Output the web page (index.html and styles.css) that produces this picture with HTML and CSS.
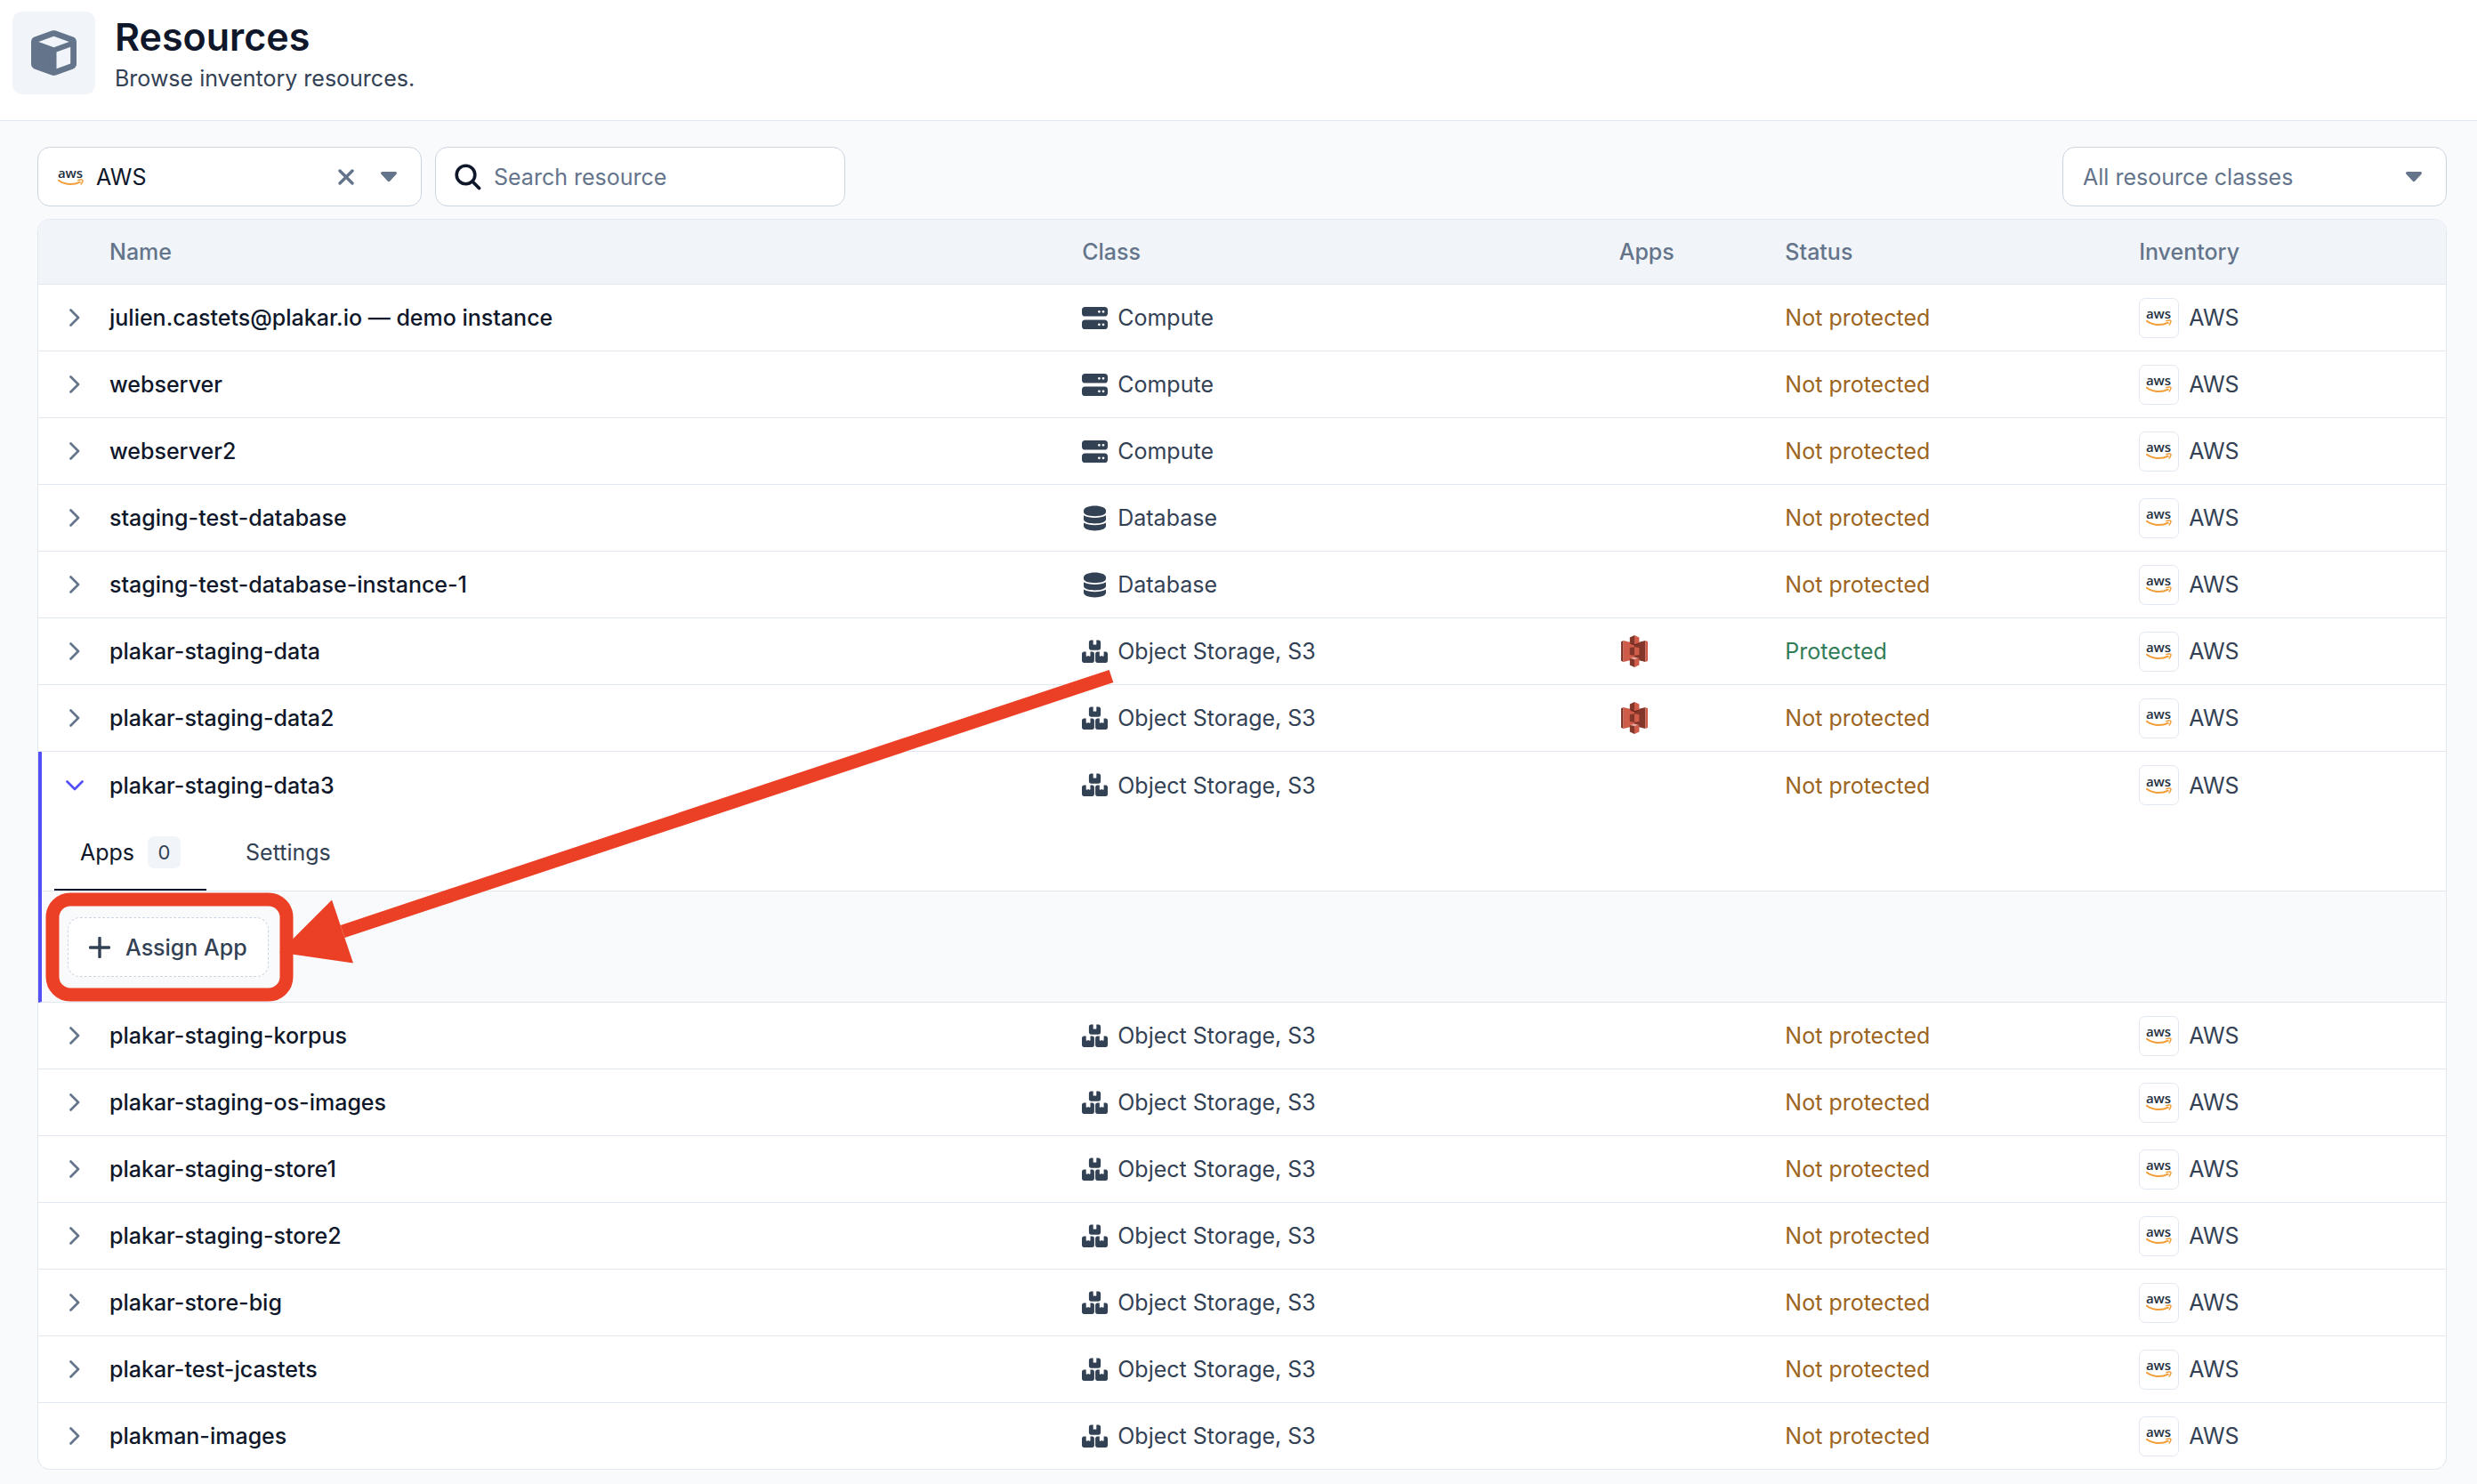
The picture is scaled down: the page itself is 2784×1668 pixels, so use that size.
FILE: index.html
```
<!DOCTYPE html>
<html lang="en">
<head>
    <meta charset="UTF-8">
    <meta name="viewport" content="width=device-width, initial-scale=1.0">
    <title>Resources</title>
    <link rel="stylesheet" href="styles.css">
</head>
<body>
    <svg class="sprite" aria-hidden="true">
        <symbol id="icon-aws" viewBox="0 0 29 20">
            <text x="14" y="11" text-anchor="middle" class="aws-word">aws</text>
            <path d="M0.8 13.800C4.600 16.600 9.200 18.100 14.200 18.100c4 0 7.600-.9 10.600-2.400" fill="none" stroke="#f19d38" stroke-width="2" stroke-linecap="round"/>
            <path d="M22.800 13.700c2-1 4.600-.9 5-.3s-.1 3-1.700 4.600" fill="none" stroke="#f19d38" stroke-width="1.500" stroke-linecap="round"/>
        </symbol>
        <symbol id="icon-caret" viewBox="0 0 18 12">
            <path d="M1.600 0h14.800c1.500 0 2.100 1.700 1.100 2.700l-7.200 7.900c-.7.8-1.900.8-2.600 0L.5 2.700C-.5 1.700.1 0 1.600 0z" fill="currentColor"/>
        </symbol>
        <symbol id="icon-close" viewBox="0 0 18 18">
            <path d="M2 2l14 14M16 2L2 16" fill="none" stroke="currentColor" stroke-width="3.400" stroke-linecap="round"/>
        </symbol>
        <symbol id="icon-search" viewBox="0 0 30 30">
            <circle cx="12.500" cy="12.500" r="10.300" fill="none" stroke="currentColor" stroke-width="3.600"/>
            <path d="M20 20l7.500 7.500" fill="none" stroke="currentColor" stroke-width="3.800" stroke-linecap="round"/>
        </symbol>
        <symbol id="icon-chevron" viewBox="0 0 12 20">
            <path d="M1.500 1.500L10 10l-8.500 8.500" fill="none" stroke="currentColor" stroke-width="2.700" stroke-linecap="round" stroke-linejoin="round"/>
        </symbol>
        <symbol id="icon-plus" viewBox="0 0 24 24">
            <path d="M12 1.500v21M1.500 12h21" fill="none" stroke="currentColor" stroke-width="3.400" stroke-linecap="round"/>
        </symbol>
        <symbol id="icon-cube" viewBox="0 0 51 51">
            <path fill="currentColor" fill-rule="evenodd" d="M23.200.5c1.500-.5 3.100-.5 4.600 0l19.400 7c2.300.8 3.800 3 3.800 5.400v25.200c0 2.400-1.500 4.600-3.800 5.400l-19.400 7c-1.500.5-3.100.5-4.600 0l-19.400-7C1.500 42.700 0 40.500 0 38.100V12.900c0-2.400 1.500-4.600 3.800-5.400zM25.500 6.800L8.300 13l17.200 6.200L42.700 13zM28.500 24.500v18.800l15.700-5.700V18.800z"/>
        </symbol>
        <symbol id="icon-compute" viewBox="0 0 29 29">
            <path fill="currentColor" fill-rule="evenodd" d="M3.600 2h21.800A3.600 3.600 0 0 1 29 5.600v3.300a3.600 3.600 0 0 1-3.600 3.600H3.600A3.600 3.600 0 0 1 0 8.900V5.600A3.600 3.600 0 0 1 3.600 2zM19.400 5.900a1.400 1.400 0 1 0 0 2.800 1.400 1.400 0 0 0 0-2.800zM24 5.900a1.400 1.400 0 1 0 0 2.800 1.400 1.400 0 0 0 0-2.800zM3.600 16.500h21.800a3.600 3.600 0 0 1 3.600 3.600v3.300a3.600 3.600 0 0 1-3.600 3.600H3.600A3.600 3.600 0 0 1 0 23.400v-3.300a3.600 3.600 0 0 1 3.600-3.600zM19.400 20.400a1.400 1.400 0 1 0 0 2.800 1.400 1.400 0 0 0 0-2.800zM24 20.400a1.400 1.400 0 1 0 0 2.800 1.400 1.400 0 0 0 0-2.800z"/>
        </symbol>
        <symbol id="icon-database" viewBox="0 0 29 29">
            <path fill="currentColor" d="M14.500.5C21.500.5 27 2.800 27 5.700v1.800c0 2.900-5.500 4.700-12.500 4.700S2 10.400 2 7.500V5.700C2 2.800 7.500.5 14.500.5zM2 11.300c3 1.900 7.500 2.700 12.500 2.700s9.500-.8 12.500-2.700v4.500c0 2.900-5.500 4.700-12.500 4.700S2 18.700 2 15.800zM2 19.600c3 1.900 7.500 2.700 12.500 2.700s9.500-.8 12.500-2.700v3.700c0 2.900-5.500 5.200-12.500 5.200S2 26.200 2 23.300z"/>
        </symbol>
        <symbol id="icon-storage" viewBox="0 0 29 29">
            <path fill="currentColor" d="M10.300 1.500h2.400v4.600c0 .6.500.9 1 .6l.8-.4.800.4c.5.300 1 0 1-.6V1.500h2.400c1.400 0 2.400 1 2.400 2.400v6.400c0 1.400-1 2.400-2.400 2.400h-8.400c-1.400 0-2.400-1-2.400-2.400V3.900c0-1.400 1-2.400 2.400-2.400z"/>
            <path fill="currentColor" d="M2.400 14.500h2.300v4.600c0 .6.500.9 1 .6l1.400-.7 1.400.7c.5.300 1 0 1-.6v-4.600h2.200c1.400 0 2.200 1 2.200 2.400v7.700c0 1.400-.9 2.400-2.200 2.400H2.400C1 27 0 26 0 24.600v-7.700c0-1.400 1-2.400 2.400-2.400z"/>
            <path fill="currentColor" d="M17.500 14.500h2.300v4.600c0 .6.500.9 1 .6l1.400-.7 1.400.7c.5.300 1 0 1-.6v-4.600h2.200c1.400 0 2.200 1 2.200 2.400v7.700c0 1.400-.9 2.400-2.200 2.400h-9.300c-1.400 0-2.400-1-2.400-2.400v-7.700c0-1.400 1-2.400 2.400-2.400z"/>
        </symbol>
        <symbol id="icon-s3" viewBox="-2 0 34 36">
            <path fill="#83362a" d="M0 7.300l2.600-1.300v24L0 28.700z"/>
            <path fill="#cf5b49" d="M2.600 6L15 9v18L2.600 30z"/>
            <path fill="#83362a" d="M27.400 6L15 9v18l12.400 3z"/>
            <path fill="#cf5b49" d="M27.400 6L30 7.300v21.400L27.400 30z"/>
            <path fill="#5e1f18" d="M9.800 9.500L15 8l5.400 1.500L15 11.200z"/>
            <path fill="#83362a" d="M9.800 2.600L15 0v10.200l-5.200-1.400zM9.800 14l5.200-.7v9.500l-5.200-.7z"/>
            <path fill="#cf5b49" d="M15 0l5.400 2.600v6.200L15 10.200zM15 13.300l5.400.7v8.100l-5.400.7z"/>
            <path fill="#e9aaa0" d="M9.800 26L15 24.500l5.400 1.500L15 27.300z"/>
            <path fill="#83362a" d="M9.800 26l5.200 1.300V36l-5.200-2.600z"/>
            <path fill="#cf5b49" d="M20.400 26L15 27.300V36l5.400-2.600z"/>
        </symbol>
    </svg>

    <header class="page-header">
        <div class="page-icon"><svg width="51" height="51"><use href="#icon-cube"/></svg></div>
        <div>
            <h1 class="page-title">Resources</h1>
            <p class="page-subtitle">Browse inventory resources.</p>
        </div>
    </header>

    <main class="page-content">
        <div class="toolbar">
            <div class="field field-select">
                <svg width="29" height="20"><use href="#icon-aws"/></svg>
                <select class="field-control" aria-label="Inventory">
                    <option>AWS</option>
                </select>
                <button type="button" class="icon-button" aria-label="Clear inventory"><svg width="18" height="18"><use href="#icon-close"/></svg></button>
                <svg class="field-caret" width="18" height="12"><use href="#icon-caret"/></svg>
            </div>
            <div class="field field-search">
                <svg width="30" height="30"><use href="#icon-search"/></svg>
                <input type="text" class="field-control" placeholder="Search resource" aria-label="Search resource">
            </div>
            <div class="field field-select field-class">
                <select class="field-control muted" aria-label="Resource class">
                    <option>All resource classes</option>
                </select>
                <svg class="field-caret" width="18" height="12"><use href="#icon-caret"/></svg>
            </div>
        </div>

        <div class="table-wrapper">
            <table class="resources">
                <colgroup>
                    <col class="col-toggle">
                    <col class="col-name">
                    <col class="col-class">
                    <col class="col-apps">
                    <col class="col-status">
                    <col>
                </colgroup>
                <thead>
                    <tr>
                        <th></th>
                        <th>Name</th>
                        <th>Class</th>
                        <th>Apps</th>
                        <th>Status</th>
                        <th>Inventory</th>
                    </tr>
                </thead>
                <tbody id="resourceRows"></tbody>
            </table>

            <svg class="callout" width="1220" height="890" aria-hidden="true">
                <rect x="17" y="765" width="263" height="107" rx="20" fill="none" stroke="#eb4025" stroke-width="15"/>
                <path d="M343 801L1207 514" stroke="#eb4025" stroke-width="15"/>
                <path d="M272 824.500L331 765.500L355 836.500z" fill="#eb4025"/>
            </svg>
        </div>
    </main>

    <template id="detailTemplate">
        <tr class="detail">
            <td colspan="6">
                <div class="tabs" role="tablist">
                    <button type="button" class="tab active" role="tab" aria-selected="true">Apps <span class="badge">0</span></button>
                    <button type="button" class="tab" role="tab" aria-selected="false">Settings</button>
                </div>
                <div class="panel">
                    <button type="button" class="assign-button"><svg width="24" height="24"><use href="#icon-plus"/></svg>Assign App</button>
                </div>
            </td>
        </tr>
    </template>

    <script src="script.js"></script>
</body>
</html>
```
FILE: styles.css
```
* {
    box-sizing: border-box;
}

body {
    margin: 0;
    font-family: Inter, "Liberation Sans", sans-serif;
    font-size: 25px;
    line-height: 36px;
    color: #0f172a;
    background-color: #f8fafc;
}

svg {
    display: block;
    flex-shrink: 0;
}

button,
input,
select {
    font: inherit;
    color: inherit;
}

.sprite {
    display: none;
}

.aws-word {
    font-family: "Open Sans", "Noto Sans", sans-serif;
    font-size: 15px;
    font-weight: 600;
    fill: #252f3e;
}

/* Header */

.page-header {
    display: flex;
    gap: 22px;
    padding: 13px 14px 29px;
    background-color: #fff;
    border-bottom: 1px solid #e2e8f0;
}

.page-icon {
    display: flex;
    align-items: center;
    justify-content: center;
    width: 93px;
    height: 93px;
    color: #64748b;
    background-color: #f1f5f9;
    border-radius: 11px;
}

.page-title {
    margin: 0;
    font-size: 43px;
    font-weight: 600;
    line-height: 57px;
}

.page-subtitle {
    margin: 0;
    color: #334155;
}

/* Toolbar */

.page-content {
    padding: 29px 34px 16px 42px;
}

.toolbar {
    display: flex;
    gap: 15px;
    margin-bottom: 14px;
}

.field {
    display: flex;
    align-items: center;
    height: 67px;
    padding: 0 21px;
    background-color: #fff;
    border: 1px solid #cbd5e1;
    border-radius: 14px;
}

.field-select {
    width: 432px;
    padding: 0 27px 0 22px;
}

.field-search {
    width: 461px;
}

.field-class {
    margin-left: auto;
}

.field-control {
    flex: 1;
    min-width: 0;
    height: 36px;
    padding: 0;
    background: none;
    border: none;
    outline: none;
    appearance: none;
}

svg + .field-control {
    margin-left: 14px;
}

.field-control::placeholder {
    color: #64748b;
    opacity: 1;
}

.muted,
.field-caret {
    color: #64748b;
}

.icon-button {
    padding: 0;
    color: #64748b;
    background: none;
    border: none;
    cursor: pointer;
}

.icon-button + .field-caret {
    margin-left: 30px;
}

/* Table */

.table-wrapper {
    position: relative;
    background-color: #fff;
    border: 1px solid #e2e8f0;
    border-radius: 14px;
}

.resources {
    width: 100%;
    table-layout: fixed;
    border-collapse: separate;
    border-spacing: 0;
}

.col-toggle {
    width: 64px;
}

.col-name {
    width: 40.4%;
}

.col-class {
    width: 22.3%;
}

.col-apps {
    width: 6.9%;
}

.col-status {
    width: 14.7%;
}

.resources th {
    height: 73px;
    padding: 0 16px;
    font-weight: 500;
    text-align: left;
    color: #64748b;
    background-color: #f1f5f9;
    border-bottom: 1px solid #e2e8f0;
}

.resources th:first-child {
    border-top-left-radius: 13px;
}

.resources th:last-child {
    border-top-right-radius: 13px;
}

.resources td {
    height: 75px;
    padding: 0 16px;
    color: #334155;
    border-bottom: 1px solid #e2e8f0;
}

.resources tr:last-child td {
    height: 74px;
    border-bottom: none;
}

.resources td.name {
    font-weight: 500;
    color: #0f172a;
}

.resources td.status {
    color: #9c6420;
}

.resources td.protected {
    color: #327d58;
}

.resources td.toggle {
    padding: 0;
}

.toggle-button {
    display: flex;
    align-items: center;
    justify-content: center;
    width: 36px;
    height: 36px;
    margin-left: 23px;
    padding: 0;
    color: #64748b;
    background: none;
    border: none;
    cursor: pointer;
}

.with-icon {
    display: flex;
    align-items: center;
    gap: 11px;
}

.inventory-logo {
    display: flex;
    align-items: center;
    justify-content: center;
    width: 45px;
    height: 45px;
    border: 1px solid #e2e8f0;
    border-radius: 7px;
}

/* Expanded row */

.resources tr.open td {
    border-bottom: none;
}

.resources tr.open td.toggle {
    box-shadow: inset 4px 0 #544ff7;
}

.open .toggle-button {
    color: #544ff7;
}

.open .toggle-button svg {
    transform: rotate(90deg);
}

.resources tr.detail td {
    padding: 0;
    border-left: 4px solid #544ff7;
}

.tabs {
    display: flex;
    gap: 15px;
    padding-left: 14px;
    border-bottom: 1px solid #e2e8f0;
}

.tab {
    display: flex;
    align-items: center;
    gap: 15px;
    height: 81px;
    padding: 0 29px 3px;
    color: #334155;
    background: none;
    border: none;
    border-bottom: 2px solid transparent;
    cursor: pointer;
}

.tab.active {
    color: #0f172a;
    border-bottom-color: #0f172a;
}

.badge {
    min-width: 37px;
    padding: 0 8px;
    font-size: 22px;
    text-align: center;
    color: #334155;
    background-color: #f1f5f9;
    border-radius: 7px;
}

.panel {
    padding: 29px 29px 28px;
    background-color: #f8fafc;
}

.assign-button {
    display: flex;
    align-items: center;
    gap: 17px;
    height: 67px;
    padding: 0 23px;
    font-weight: 500;
    color: #334155;
    background-color: #fff;
    border: 1px dashed #cbd5e1;
    border-radius: 14px;
    cursor: pointer;
}

.callout {
    position: absolute;
    top: -1px;
    left: -1px;
    pointer-events: none;
}
```
FILE: script.js
```
const resources = [
    { name: 'julien.castets@plakar.io — demo instance', type: 'compute' },
    { name: 'webserver', type: 'compute' },
    { name: 'webserver2', type: 'compute' },
    { name: 'staging-test-database', type: 'database' },
    { name: 'staging-test-database-instance-1', type: 'database' },
    { name: 'plakar-staging-data', type: 'storage', app: true, isProtected: true },
    { name: 'plakar-staging-data2', type: 'storage', app: true },
    { name: 'plakar-staging-data3', type: 'storage', open: true },
    { name: 'plakar-staging-korpus', type: 'storage' },
    { name: 'plakar-staging-os-images', type: 'storage' },
    { name: 'plakar-staging-store1', type: 'storage' },
    { name: 'plakar-staging-store2', type: 'storage' },
    { name: 'plakar-store-big', type: 'storage' },
    { name: 'plakar-test-jcastets', type: 'storage' },
    { name: 'plakman-images', type: 'storage' }
];

const classLabels = {
    compute: 'Compute',
    database: 'Database',
    storage: 'Object Storage, S3'
};

function icon(name, width, height) {
    return `<svg width="${width}" height="${height}"><use href="#icon-${name}"/></svg>`;
}

const tbody = document.getElementById('resourceRows');
const detailTemplate = document.getElementById('detailTemplate');

resources.forEach(item => {
    const row = document.createElement('tr');
    if (item.open) {
        row.classList.add('open');
    }

    row.innerHTML = `
        <td class="toggle"><button type="button" class="toggle-button" aria-label="Toggle ${item.name}" aria-expanded="${Boolean(item.open)}">${icon('chevron', 12, 20)}</button></td>
        <td class="name">${item.name}</td>
        <td><div class="with-icon">${icon(item.type, 29, 29)}${classLabels[item.type]}</div></td>
        <td>${item.app ? icon('s3', 34, 36) : ''}</td>
        <td class="status ${item.isProtected ? 'protected' : ''}">${item.isProtected ? 'Protected' : 'Not protected'}</td>
        <td><div class="with-icon"><span class="inventory-logo">${icon('aws', 29, 20)}</span>AWS</div></td>
    `;
    tbody.appendChild(row);

    if (item.open) {
        tbody.appendChild(detailTemplate.content.cloneNode(true));
    }
});
```
